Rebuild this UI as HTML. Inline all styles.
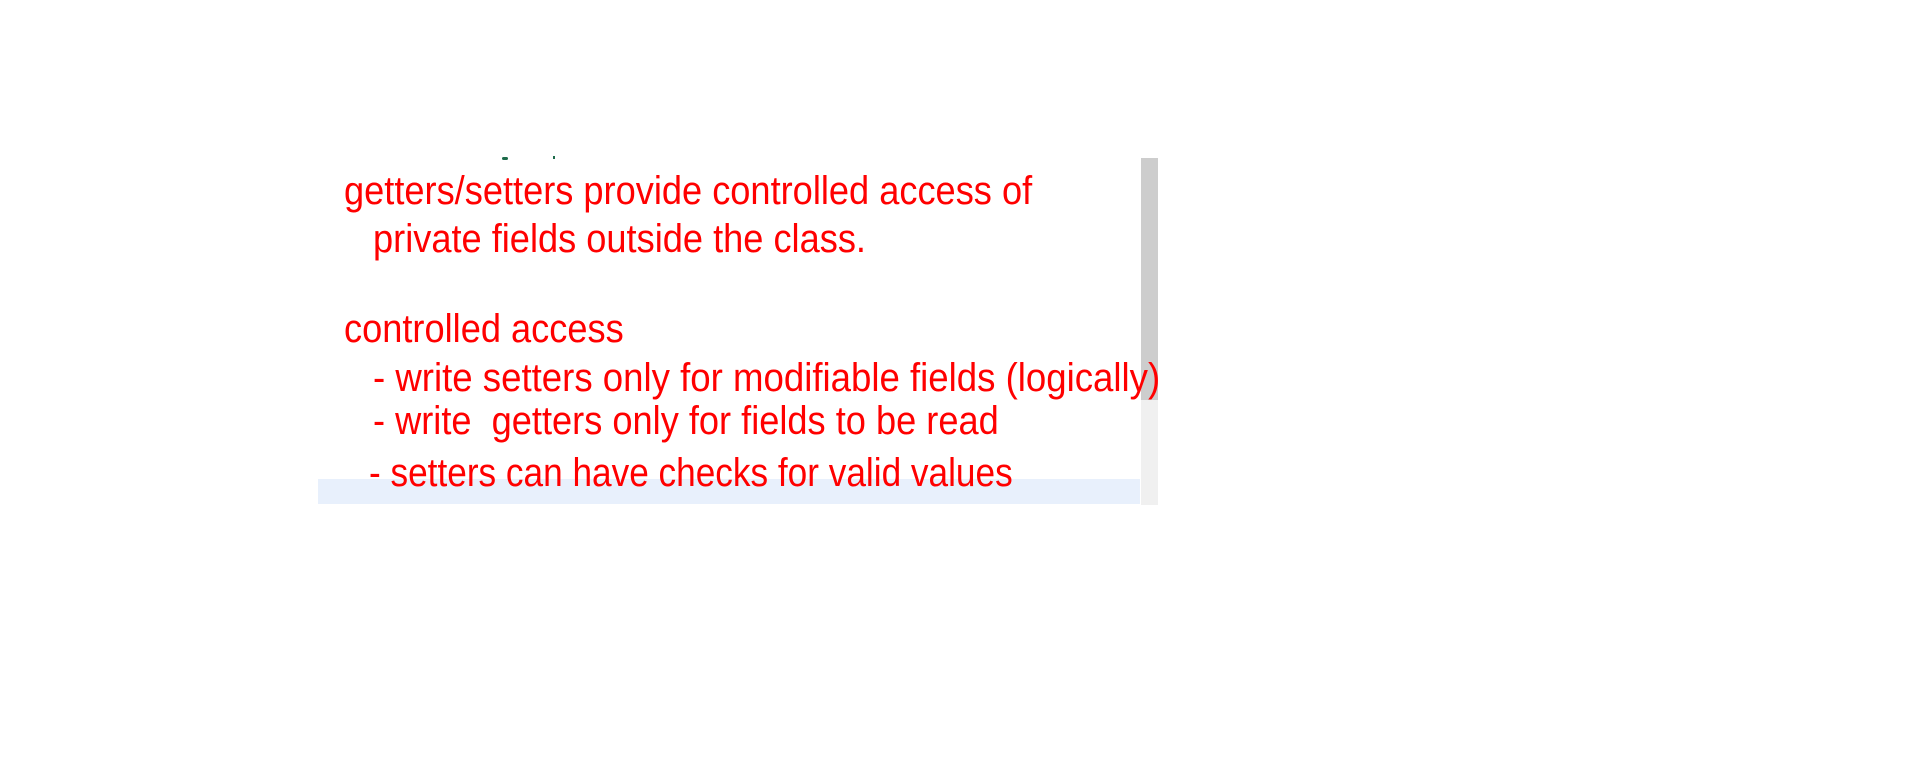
<!DOCTYPE html>
<html><head><meta charset="utf-8"><style>
html,body{margin:0;padding:0;width:1910px;height:772px;background:#fff;overflow:hidden;position:relative}
.t{position:absolute;color:#ff0000;font-family:"Liberation Sans",sans-serif;font-size:40px;white-space:pre;line-height:1;transform:scaleX(0.905);transform-origin:0 0}
</style></head><body>
<div style="position:absolute;left:318px;top:479px;width:822px;height:25px;background:#e8f0fc"></div>
<div style="position:absolute;left:1141px;top:158px;width:17px;height:347px;background:#f0f0f0"></div>
<div style="position:absolute;left:1141px;top:158px;width:17px;height:242px;background:#cdcdcd"></div>
<div style="position:absolute;left:502px;top:157px;width:6px;height:3px;background:#1d6b4a;border-radius:2px"></div>
<div style="position:absolute;left:553px;top:156px;width:2px;height:3px;background:#1d6b4a"></div>
<div class="t" style="left:344px;top:171px">getters/setters provide controlled access of</div>
<div class="t" style="left:373px;top:219px">private fields outside the class.</div>
<div class="t" style="left:344px;top:309px">controlled access</div>
<div class="t" style="left:373px;top:358px;transform:scaleX(0.915)">- write setters only for modifiable fields (logically)</div>
<div class="t" style="left:373px;top:401px">- write  getters only for fields to be read</div>
<div class="t" style="left:369px;top:453px;transform:scaleX(0.88)">- setters can have checks for valid values</div>
</body></html>
